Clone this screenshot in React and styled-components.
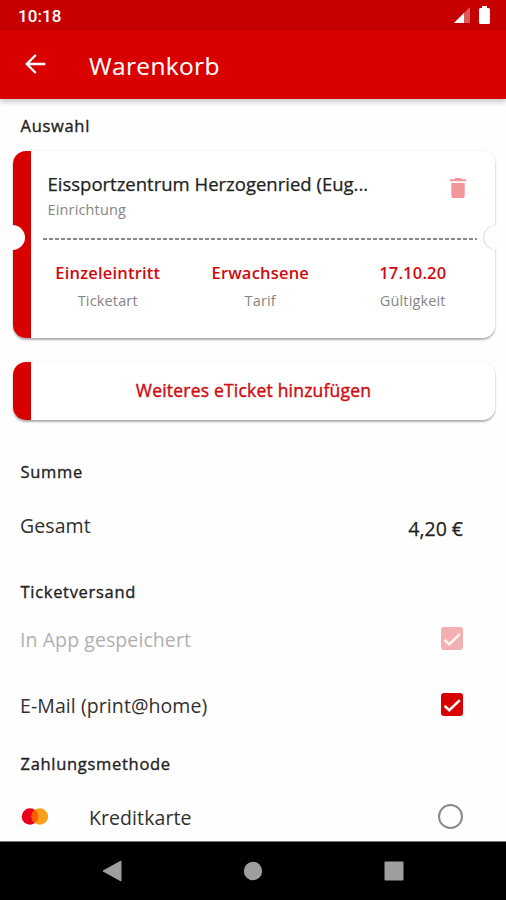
import React from "react";
import styled, { createGlobalStyle, css } from "styled-components";

const GlobalStyle = createGlobalStyle`
  * { box-sizing: border-box; }
  body { margin: 0; background: #fefefe; }
`;

const medium = css`
  font-weight: 400;
  -webkit-text-stroke: 0.25px currentColor;
`;

const Screen = styled.div`
  width: 506px;
  height: 900px;
  display: flex;
  flex-direction: column;
  overflow: hidden;
  background: #fefefe;
  color: #222;
  font-family: "Open Sans", "Noto Sans", sans-serif;
`;

const StatusBar = styled.header`
  flex: none;
  height: 30px;
  padding: 1px 16px 0 18px;
  display: flex;
  align-items: center;
  justify-content: space-between;
  background: #c60000;
  color: #fff;
  font: 500 17px/30px Roboto, sans-serif;
  letter-spacing: 0.1px;
`;

const StatusIcons = styled.div`
  display: flex;
  align-items: center;
  gap: 9px;
  padding-bottom: 2px;
`;

const AppBar = styled.div`
  flex: none;
  height: 68.5px;
  padding-left: 25px;
  display: flex;
  align-items: center;
  gap: 43px;
  background: #d90000;
  color: #fff;
  box-shadow: 0 3px 5px rgba(0, 0, 0, 0.22);
`;

const Title = styled.h1`
  margin: 0;
  padding-top: 3px;
  font-size: 24.5px;
  line-height: 32px;
  font-weight: 400;
  -webkit-text-stroke: 0.1px currentColor;
  letter-spacing: 0.35px;
`;

const Content = styled.main`
  flex: 1;
  min-height: 0;
  overflow: hidden;
  display: flex;
  flex-direction: column;
`;

const Heading = styled.h2`
  flex: none;
  margin: ${(p) => p.$top}px 0 0 20.5px;
  font-size: 16.5px;
  line-height: 24px;
  font-weight: 400;
  -webkit-text-stroke: 0.35px currentColor;
  letter-spacing: 0.7px;
`;

const Card = styled.section`
  flex: none;
  position: relative;
  width: 482.5px;
  height: ${(p) => p.$height}px;
  margin: ${(p) => p.$top}px 0 0 12.5px;
  padding-left: 18.5px;
  border-radius: 13px;
  background: linear-gradient(to right, #d90000 18px, #fff 18px);
  box-shadow: 0 2px 2px rgba(0, 0, 0, 0.3), 0 0 3px rgba(0, 0, 0, 0.08);
`;

const Notch = styled.span`
  position: absolute;
  top: 74px;
  ${(p) => p.$side}: -12.5px;
  width: 25px;
  height: 25px;
  border-radius: 50%;
  background: #fefefe;
  box-shadow: ${(p) => (p.$side === "right" ? "inset 1px 0 1px rgba(0, 0, 0, 0.16)" : "none")};
  clip-path: ${(p) => (p.$side === "right" ? "inset(-1px 8px -1px -1px)" : "none")};
`;

const NotchCover = styled.span`
  position: absolute;
  top: 75px;
  right: -6px;
  width: 7px;
  height: 23px;
  background: #fefefe;
`;

const Venue = styled.div`
  height: 87px;
  padding: 20.5px 29px 0 16.5px;
  display: flex;
  justify-content: space-between;
`;

const VenueName = styled.div`
  font-size: 18.5px;
  line-height: 26px;
  ${medium}
  white-space: nowrap;
`;

const Caption = styled.div`
  font-size: 14.5px;
  line-height: 26px;
  letter-spacing: 0.15px;
  color: #858585;
`;

const TrashIcon = styled.svg`
  margin-top: 6.5px;
`;

const Divider = styled.div`
  width: 433.5px;
  height: 2px;
  margin-left: 12px;
  background: repeating-linear-gradient(to right, #888 0 4px, transparent 4px 6px);
`;

const Details = styled.div`
  display: grid;
  grid-template-columns: repeat(3, 152.5px);
  margin-top: 20px;
  padding-left: 0.5px;
  text-align: center;
`;

const DetailValue = styled.div`
  font-size: 16.5px;
  line-height: 26px;
  font-weight: 600;
  letter-spacing: 0.2px;
  color: #d00a10;
  margin-bottom: 2px;
`;

const AddButton = styled.button`
  width: 445px;
  height: 58px;
  padding: 0 0 1.5px;
  border: 0;
  background: none;
  color: #d00a10;
  font: 400 17.5px/26px "Open Sans", sans-serif;
  -webkit-text-stroke: 0.4px currentColor;
  letter-spacing: 0.2px;
`;

const Row = styled.div`
  flex: none;
  height: 28px;
  margin-top: ${(p) => p.$top}px;
  padding: 0 43px 0 20px;
  display: flex;
  align-items: center;
  justify-content: space-between;
`;

const Label = styled.span`
  padding-top: 2px;
  font-size: 19.5px;
  line-height: 28px;
  letter-spacing: 0.08px;
  color: ${(p) => (p.$disabled ? "#b0b0b0" : "#303030")};
`;

const Price = styled.span`
  padding-top: 8px;
  font-size: 19.5px;
  line-height: 28px;
  ${medium}
`;

const Payment = styled.span`
  display: flex;
  align-items: center;
  gap: 41px;
`;

const Checkbox = styled.span`
  width: 22.5px;
  height: 22.5px;
  border-radius: 3px;
  display: flex;
  align-items: center;
  justify-content: center;
  background: ${(p) => (p.$disabled ? "#f2b0b3" : "#d90000")};
`;

const Radio = styled.span`
  width: 25px;
  height: 25px;
  margin-top: -1px;
  border: 2px solid #888;
  border-radius: 50%;
`;

const NavBar = styled.nav`
  flex: none;
  height: 59px;
  padding: 0 102px 1px;
  border-top: 1px solid #777;
  background: #000;
  display: flex;
  align-items: center;
  justify-content: space-between;
`;

const Check = ({ disabled }) => (
  <Checkbox $disabled={disabled}>
    <svg width="22" height="22" viewBox="0 0 22 22">
      <path d="M3.6 11.8 8.3 16.2 18.8 6.1" fill="none" stroke={disabled ? "#fff5f0" : "#fff"} strokeWidth="2.5" />
    </svg>
  </Checkbox>
);

const details = [
  { value: "Einzeleintritt", label: "Ticketart" },
  { value: "Erwachsene", label: "Tarif" },
  { value: "17.10.20", label: "Gültigkeit" },
];

export default function App() {
  return (
    <Screen>
      <GlobalStyle />
      <StatusBar>
        10:18
        <StatusIcons>
          <svg width="16" height="16" viewBox="0 0 16 16">
            <path d="M0 16 16 0V16Z" fill="#fff" fillOpacity=".35" />
            <path d="M0 16 10 6V16Z" fill="#fff" />
          </svg>
          <svg width="11" height="18" viewBox="0 0 11 18">
            <path d="M3 0H8V2H9.5Q11 2 11 3.5V16.5Q11 18 9.5 18H1.5Q0 18 0 16.5V3.5Q0 2 1.5 2H3Z" fill="#fff" />
          </svg>
        </StatusIcons>
      </StatusBar>
      <AppBar>
        <svg width="21" height="20" viewBox="0 0 21 20">
          <path d="M20.3 10H2M10.8 1 1.8 10 10.8 19" fill="none" stroke="#fff" strokeWidth="2.4" />
        </svg>
        <Title>Warenkorb</Title>
      </AppBar>
      <Content>
        <Heading $top={15.5}>Auswahl</Heading>
        <Card $top={12.5} $height={187}>
          <Venue>
            <div>
              <VenueName>Eissportzentrum Herzogenried (Eug...</VenueName>
              <Caption>Einrichtung</Caption>
            </div>
            <TrashIcon width="16" height="20" viewBox="0 0 16 20">
              <path d="M0 1.2H4.2L5.2 0H10.8L11.8 1.2H16V3.2H0ZM1.3 5H14.7V17.8Q14.7 20 12.5 20H3.5Q1.3 20 1.3 17.8Z" fill="#f4959a" />
            </TrashIcon>
          </Venue>
          <Divider />
          <Details>
            {details.map((d) => (
              <div key={d.label}>
                <DetailValue>{d.value}</DetailValue>
                <Caption>{d.label}</Caption>
              </div>
            ))}
          </Details>
          <Notch $side="left" />
          <NotchCover />
          <Notch $side="right" />
        </Card>
        <Card $top={24.5} $height={57.5}>
          <AddButton>Weiteres eTicket hinzufügen</AddButton>
        </Card>
        <Heading $top={40}>Summe</Heading>
        <Row $top={27.5}>
          <Label>Gesamt</Label>
          <Price>4,20 €</Price>
        </Row>
        <Heading $top={40.5}>Ticketversand</Heading>
        <Row $top={21}>
          <Label $disabled>In App gespeichert</Label>
          <Check disabled />
        </Row>
        <Row $top={38}>
          <Label>E-Mail (print@home)</Label>
          <Check />
        </Row>
        <Heading $top={33}>Zahlungsmethode</Heading>
        <Row $top={27}>
          <Payment>
            <svg width="28" height="18" viewBox="0 0 28 18">
              <circle cx="10" cy="8.5" r="8.3" fill="#eb001b" />
              <circle cx="19.8" cy="8.5" r="8.3" fill="#f9a01b" />
              <path d="M14.9 1.8a8.3 8.3 0 0 1 0 13.4 8.3 8.3 0 0 1 0-13.4Z" fill="#ff5f00" />
            </svg>
            <Label>Kreditkarte</Label>
          </Payment>
          <Radio />
        </Row>
      </Content>
      <NavBar>
        <svg width="20" height="22" viewBox="0 0 20 22">
          <path d="M1 11 19 1V21Z" fill="#9e9e9e" stroke="#9e9e9e" strokeLinejoin="round" />
        </svg>
        <svg width="20" height="20" viewBox="0 0 20 20">
          <circle cx="10" cy="10" r="9.2" fill="#9e9e9e" />
        </svg>
        <svg width="20" height="20" viewBox="0 0 20 20">
          <rect x=".5" y=".5" width="19" height="19" rx="1" fill="#9e9e9e" />
        </svg>
      </NavBar>
    </Screen>
  );
}
